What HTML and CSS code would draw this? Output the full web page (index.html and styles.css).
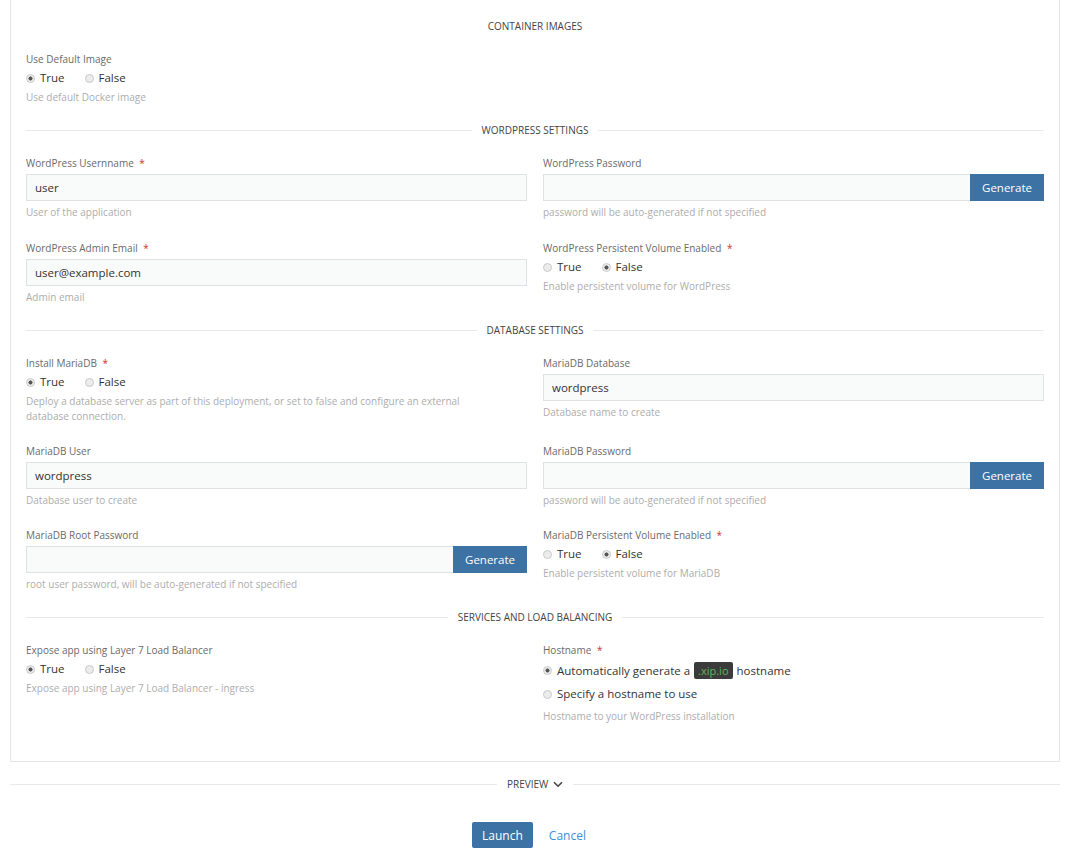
FILE: index.html
```html
<!DOCTYPE html>
<html lang="en">
<head>
    <meta name="viewport" content="width=device-width, initial-scale=1">
    <title>Launch: WordPress</title>
    <link rel="stylesheet" href="styles.css">
</head>
<body>

<div class="page">
    <div class="box">
        <div class="section-title plain"><span>Container Images</span></div>

        <div class="grid">
            <div class="field">
                <label class="field-label">Use Default Image</label>
                <div class="radios">
                    <label class="radio"><input type="radio" name="defImage" checked> True</label>
                    <label class="radio"><input type="radio" name="defImage"> False</label>
                </div>
                <p class="help">Use default Docker image</p>
            </div>
        </div>

        <div class="section-title"><span>WordPress Settings</span></div>

        <div class="grid">
            <div class="field">
                <label class="field-label">WordPress Usernname <b class="req">*</b></label>
                <input class="text" type="text" value="user">
                <p class="help">User of the application</p>
            </div>
            <div class="field">
                <label class="field-label">WordPress Password</label>
                <div class="input-group">
                    <input class="text" type="text">
                    <button class="btn">Generate</button>
                </div>
                <p class="help">password will be auto-generated if not specified</p>
            </div>
            <div class="field">
                <label class="field-label">WordPress Admin Email <b class="req">*</b></label>
                <input class="text" type="text" value="user@example.com">
                <p class="help">Admin email</p>
            </div>
            <div class="field">
                <label class="field-label">WordPress Persistent Volume Enabled <b class="req">*</b></label>
                <div class="radios">
                    <label class="radio"><input type="radio" name="wpVol"> True</label>
                    <label class="radio"><input type="radio" name="wpVol" checked> False</label>
                </div>
                <p class="help">Enable persistent volume for WordPress</p>
            </div>
        </div>

        <div class="section-title"><span>Database Settings</span></div>

        <div class="grid tight">
            <div class="field">
                <label class="field-label">Install MariaDB <b class="req">*</b></label>
                <div class="radios">
                    <label class="radio"><input type="radio" name="maria" checked> True</label>
                    <label class="radio"><input type="radio" name="maria"> False</label>
                </div>
                <p class="help">Deploy a database server as part of this deployment, or set to false and configure an external database connection.</p>
            </div>
            <div class="field">
                <label class="field-label">MariaDB Database</label>
                <input class="text" type="text" value="wordpress">
                <p class="help">Database name to create</p>
            </div>
            <div class="field">
                <label class="field-label">MariaDB User</label>
                <input class="text" type="text" value="wordpress">
                <p class="help">Database user to create</p>
            </div>
            <div class="field">
                <label class="field-label">MariaDB Password</label>
                <div class="input-group">
                    <input class="text" type="text">
                    <button class="btn">Generate</button>
                </div>
                <p class="help">password will be auto-generated if not specified</p>
            </div>
            <div class="field">
                <label class="field-label">MariaDB Root Password</label>
                <div class="input-group">
                    <input class="text" type="text">
                    <button class="btn">Generate</button>
                </div>
                <p class="help">root user password, will be auto-generated if not specified</p>
            </div>
            <div class="field">
                <label class="field-label">MariaDB Persistent Volume Enabled <b class="req">*</b></label>
                <div class="radios">
                    <label class="radio"><input type="radio" name="mariaVol"> True</label>
                    <label class="radio"><input type="radio" name="mariaVol" checked> False</label>
                </div>
                <p class="help">Enable persistent volume for MariaDB</p>
            </div>
        </div>

        <div class="section-title"><span>Services and Load Balancing</span></div>

        <div class="grid">
            <div class="field">
                <label class="field-label">Expose app using Layer 7 Load Balancer</label>
                <div class="radios">
                    <label class="radio"><input type="radio" name="ingress" checked> True</label>
                    <label class="radio"><input type="radio" name="ingress"> False</label>
                </div>
                <p class="help">Expose app using Layer 7 Load Balancer - ingress</p>
            </div>
            <div class="field">
                <label class="field-label">Hostname <b class="req">*</b></label>
                <div class="radios stacked">
                    <label class="radio"><input type="radio" name="host" checked> Automatically generate a <code class="badge">.xip.io</code> hostname</label>
                    <label class="radio"><input type="radio" name="host"> Specify a hostname to use</label>
                </div>
                <p class="help host-help">Hostname to your WordPress installation</p>
            </div>
        </div>
    </div>

    <div class="section-title preview"><span>Preview
        <svg class="chev" width="10" height="7" viewBox="0 0 10 7"><path d="M1 1.2 5 5.2 9 1.2" fill="none" stroke="#444" stroke-width="1.6"/></svg>
    </span></div>

    <div class="footer">
        <button class="btn launch">Launch</button>
        <button class="link">Cancel</button>
    </div>
</div>

</body>
</html>
```

FILE: styles.css
```css
html, body {
    margin: 0;
    padding: 0;
    background: #fff;
    overflow: hidden;
}

body {
    font-family: "Open Sans", "Liberation Sans", sans-serif;
    color: #333;
    font-size: 12px;
}

.page {
    width: 1050px;
    margin-left: 10px;
}

.box {
    border: 1px solid #e6e6e6;
    border-top: 0;
    padding: 19px 15px 37px;
}

.section-title {
    display: flex;
    align-items: center;
    gap: 10px;
    height: 14px;
    margin: 18px 0 19px;
    font-size: 10px;
    line-height: 14px;
    text-transform: uppercase;
    color: #444;
}

.section-title:before,
.section-title:after {
    content: "";
    flex: 1;
    height: 1px;
    background: #e9e9e9;
}

.section-title.plain {
    margin-top: 0;
}

.section-title.plain:before,
.section-title.plain:after {
    background: transparent;
}

.section-title.preview {
    margin: 15px 0 31px;
}

.chev {
    margin-left: 2px;
    vertical-align: 0;
}

.grid {
    display: grid;
    grid-template-columns: 1fr 1fr;
    column-gap: 16px;
    row-gap: 21px;
}

.grid.tight {
    row-gap: 20px;
}

.field-label {
    display: block;
    font-size: 10px;
    line-height: 14px;
    color: #6a6a6a;
    margin-bottom: 4px;
}

.req {
    color: #d0312d;
    font-weight: normal;
    margin-left: 3px;
}

.help {
    margin: 4px 0 0;
    font-size: 10px;
    line-height: 15px;
    color: #adadad;
    padding-right: 40px;
}

.help.host-help {
    margin-top: 7px;
}

.text {
    display: block;
    box-sizing: border-box;
    width: 100%;
    height: 27px;
    margin: 0;
    padding: 0 8px;
    border: 1px solid #dfe2e4;
    background: #f9fafa;
    font-family: inherit;
    font-size: 11.5px;
    color: #333;
    outline: none;
}

.input-group {
    display: flex;
}

.input-group .text {
    flex: 1;
    border-right: 0;
}

.btn {
    height: 27px;
    padding: 0 12px;
    border: none;
    border-radius: 0;
    background: #3c73a4;
    color: #fff;
    font-family: inherit;
    font-size: 11.5px;
    cursor: pointer;
}

.radios {
    display: flex;
    gap: 20px;
    height: 16px;
}

.radios.stacked {
    flex-direction: column;
    gap: 7px;
    height: auto;
    margin-top: 5px;
}

.radio {
    display: flex;
    align-items: center;
    font-size: 11.5px;
    line-height: 16px;
    color: #333;
    white-space: nowrap;
}

.radio input {
    appearance: none;
    -webkit-appearance: none;
    width: 9px;
    height: 9px;
    margin: 0 5px 0 0;
    border: 1px solid #c9c9c9;
    border-radius: 50%;
    background: #ececec;
    box-sizing: border-box;
}

.radio input:checked {
    background: radial-gradient(circle, #555 0 1.8px, #ececec 2.3px);
}

.badge {
    display: inline-block;
    margin: 0 4px;
    padding: 0 4px;
    background: #3b3b3b;
    color: #5cb85c;
    font-family: inherit;
    font-size: 11px;
    line-height: 17px;
    border-radius: 2px;
}

.footer {
    display: flex;
    justify-content: center;
    align-items: center;
    gap: 4px;
}

.btn.launch {
    height: 26px;
    padding: 0 10px;
    font-size: 12px;
    border-radius: 2px;
}

.link {
    border: none;
    background: none;
    padding: 0 12px;
    font-family: inherit;
    font-size: 12px;
    color: #3d8ed8;
    cursor: pointer;
}
```
